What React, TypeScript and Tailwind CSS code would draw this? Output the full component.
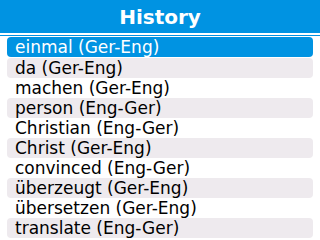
import React from "react"

const entries = [
  "einmal (Ger-Eng)",
  "da (Ger-Eng)",
  "machen (Ger-Eng)",
  "person (Eng-Ger)",
  "Christian (Eng-Ger)",
  "Christ (Ger-Eng)",
  "convinced (Eng-Ger)",
  "überzeugt (Ger-Eng)",
  "übersetzen (Ger-Eng)",
  "translate (Eng-Ger)",
]

export default function App() {
  const selected = 0

  return (
    <div
      className="w-[320px] h-[240px] bg-white overflow-hidden"
      style={{ fontFamily: '"DejaVu Sans", sans-serif' }}
    >
      {/* Title bar */}
      <div className="h-[33px] bg-[#0093e2] flex items-center justify-center">
        <h1 className="text-white font-bold text-[20px] leading-none">History</h1>
      </div>
      <div className="h-[2px]" />
      <div className="h-[1px] bg-[#0093e2]" />

      {/* List */}
      <div className="flex flex-col px-[7px] pt-[1px]">
        {entries.map((entry, i) => (
          <div
            key={entry}
            className={`h-[20px] rounded-[4px] pl-[8px] flex items-center text-[17px] leading-none ${
              i === selected
                ? "bg-[#0093e2] text-white mb-[1px]"
                : i % 2 === 1
                ? "bg-[#eeeaee] text-black"
                : "bg-white text-black"
            }`}
          >
            {entry}
          </div>
        ))}
      </div>
    </div>
  )
}
